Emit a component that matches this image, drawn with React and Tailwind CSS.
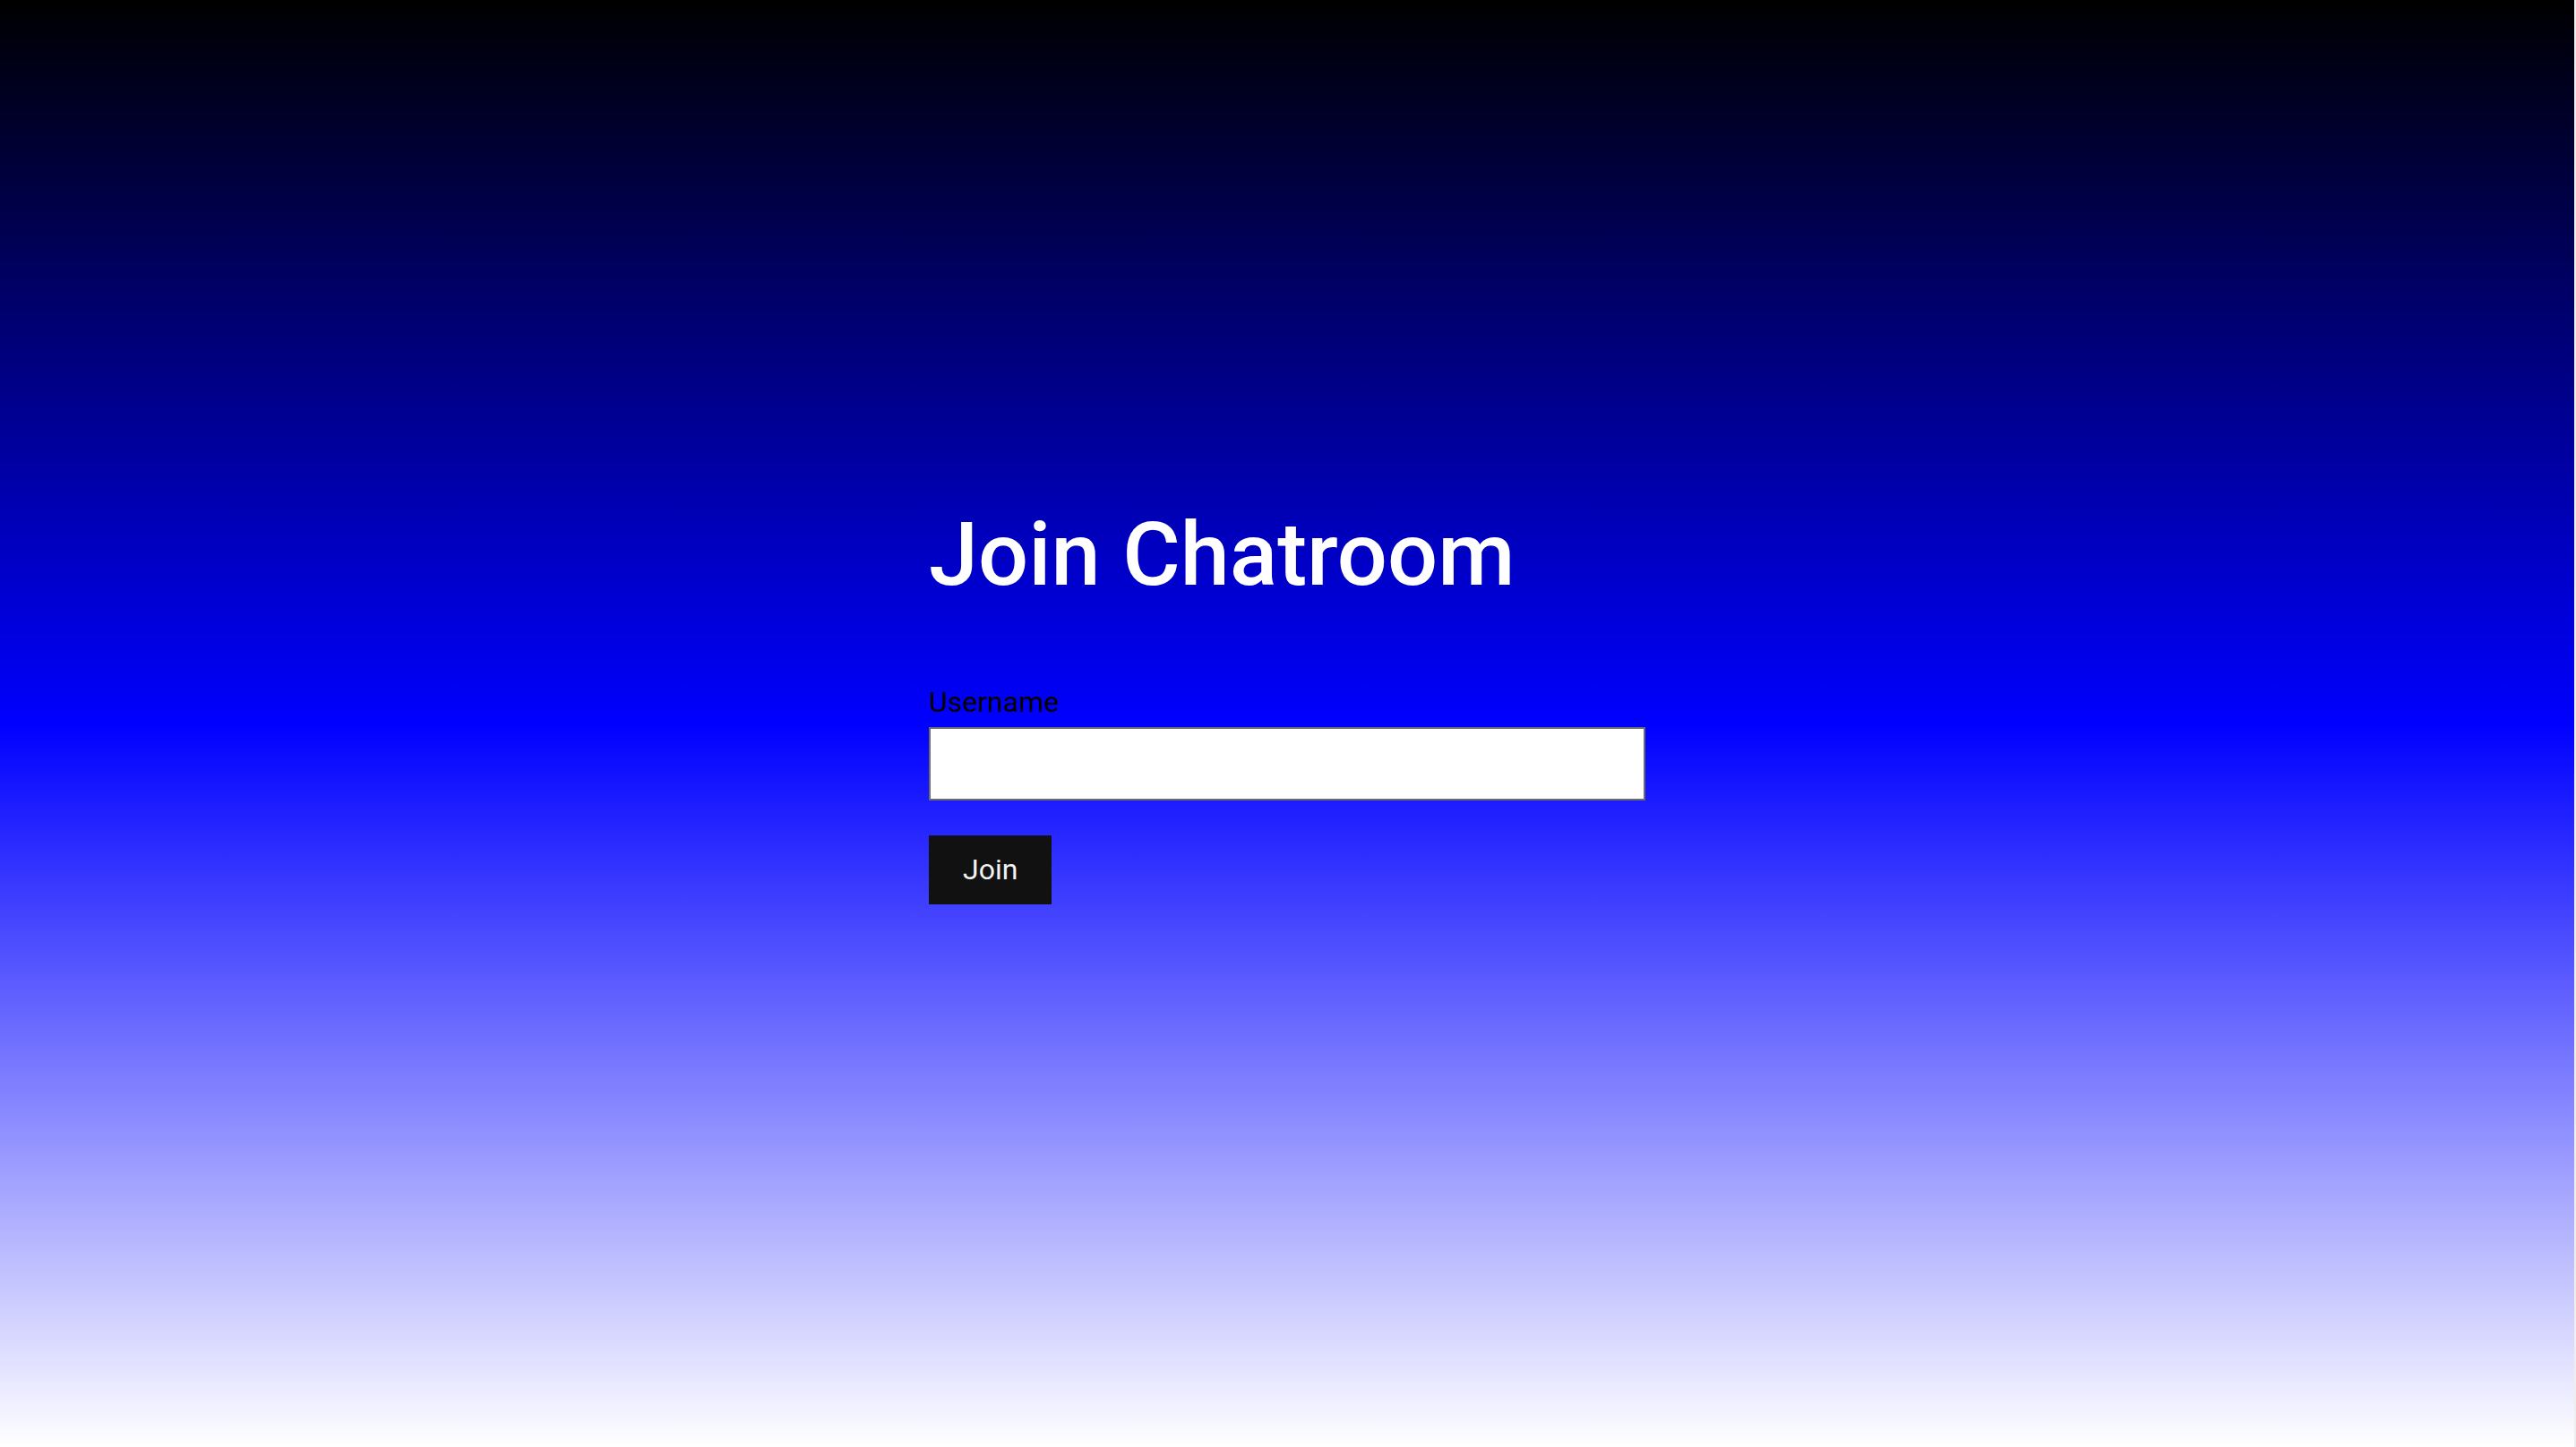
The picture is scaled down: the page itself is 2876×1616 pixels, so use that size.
import React, { useState } from "react";

export default function App() {
  const [username, setUsername] = useState("");

  return (
    <div className="flex min-h-screen w-full">
      <div
        className="flex-1 min-h-screen bg-[linear-gradient(to_bottom,#000000,#0000ff,#ffffff)] font-['Roboto',sans-serif]"
      >
        <div className="mx-auto w-[800px] pt-[560px]">
          <h1 className="text-[99px] leading-[1.2] font-medium text-white">
            Join Chatroom
          </h1>

          <form
            onSubmit={(e) => e.preventDefault()}
            className="mt-[86px] flex flex-col items-start"
          >
            <label
              htmlFor="username"
              className="block text-[32px] leading-[1.2] text-black"
            >
              Username
            </label>
            <input
              id="username"
              type="text"
              value={username}
              onChange={(e) => setUsername(e.target.value)}
              className="mt-[9px] h-[82px] w-[800px] border-2 border-[#6b6b6b] bg-white px-3 text-[32px] text-black outline-none"
            />
            <button
              type="submit"
              className="mt-[39px] h-[77px] bg-[#111111] px-[38px] text-[32px] leading-[1.15] text-[#f2f2f2]"
            >
              Join
            </button>
          </form>
        </div>
      </div>
      <div className="w-[2px] bg-[#eeeeee]" />
    </div>
  );
}
